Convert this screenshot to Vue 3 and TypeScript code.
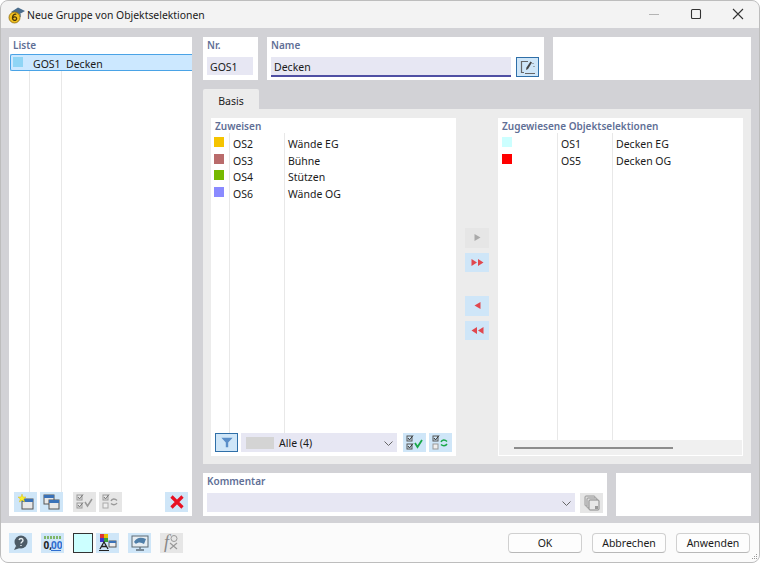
<script setup lang="ts">
const available = [
  { color: '#f5c400', no: 'OS2', name: 'Wände EG' },
  { color: '#b96b6b', no: 'OS3', name: 'Bühne' },
  { color: '#76b900', no: 'OS4', name: 'Stützen' },
  { color: '#8a8aff', no: 'OS6', name: 'Wände OG' },
];
const assigned = [
  { color: '#ccffff', no: 'OS1', name: 'Decken EG' },
  { color: '#ff0000', no: 'OS5', name: 'Decken OG' },
];
</script>

<template>
  <div class="window">
    <header class="titlebar">
      <svg class="app-icon" width="18" height="18" viewBox="0 0 18 18">
        <path d="M3 6 L10 1.5 L17 5 L10 9 Z" fill="#4a6d8c" />
        <path d="M6 8 L13 8 L13 11 L6 11 Z" fill="#7d95aa" />
        <circle cx="6.5" cy="11.5" r="5.5" fill="#f0c020" stroke="#8a6a10" stroke-width="0.8" />
        <path d="M8.3 8.3 C6 7.8 4.4 9.6 4.5 12 C4.6 15 8.6 15 8.6 12.5 C8.6 10.5 5.6 10.4 4.7 12" fill="none" stroke="#4a3808" stroke-width="1.3" />
      </svg>
      <span class="title">Neue Gruppe von Objektselektionen</span>
      <div class="winbtns">
        <svg width="12" height="12" viewBox="0 0 12 12"><path d="M1 6.5 H11" stroke="#b4b4b4" /></svg>
        <svg width="12" height="12" viewBox="0 0 12 12"><rect x="1.5" y="1.5" width="9" height="9" rx="1" fill="none" stroke="#333" stroke-width="1.1" /></svg>
        <svg width="12" height="12" viewBox="0 0 12 12"><path d="M1 1 L11 11 M11 1 L1 11" stroke="#333" stroke-width="1.1" /></svg>
      </div>
    </header>

    <main class="body">
      <aside class="panel list-panel">
        <div class="label">Liste</div>
        <div class="list-area">
          <div class="list-lines"><i></i><i></i></div>
          <div class="list-row">
            <span class="list-swatch"></span>
            <span class="list-no">GOS1</span>
            <span>Decken</span>
          </div>
        </div>
        <div class="list-tools">
          <button class="tb">
            <svg width="17" height="16" viewBox="0 0 17 16">
              <rect x="5" y="5" width="11" height="10" fill="#e8e8e8" stroke="#555" /><rect x="5" y="5" width="11" height="3" fill="#3a72b8" />
              <path d="M5 0 L6 3 L9 3 L6.8 5 L7.6 8 L5 6.3 L2.4 8 L3.2 5 L1 3 L4 3 Z" fill="#f7ee2c" stroke="#d9b100" stroke-width="0.4" />
            </svg>
          </button>
          <button class="tb">
            <svg width="17" height="16" viewBox="0 0 17 16">
              <rect x="1" y="1" width="10" height="9" fill="#e8e8e8" stroke="#555" /><rect x="1" y="1" width="10" height="3" fill="#3a72b8" />
              <rect x="6" y="6" width="10" height="9" fill="#e8e8e8" stroke="#555" /><rect x="6" y="6" width="10" height="3" fill="#3a72b8" />
            </svg>
          </button>
          <button class="tb off tb-first-off">
            <svg width="17" height="16" viewBox="0 0 17 16">
              <rect x="1" y="1" width="5" height="5" fill="none" stroke="#999" /><rect x="1" y="9" width="5" height="5" fill="none" stroke="#999" />
              <path d="M2 3 L3.5 5 L7 0.5 M2 11 L3.5 13 L7 8.5" fill="none" stroke="#777" />
              <path d="M9 8 L11.5 12 L16 5" fill="none" stroke="#999" stroke-width="1.5" />
            </svg>
          </button>
          <button class="tb off">
            <svg width="17" height="16" viewBox="0 0 17 16">
              <rect x="1" y="1" width="5" height="5" fill="none" stroke="#999" /><rect x="1" y="9" width="5" height="5" fill="#eee" stroke="#aaa" />
              <path d="M2 3 L3.5 5 L7 0.5" fill="none" stroke="#777" />
              <path d="M9 7 C10 4.5 13 4.5 15 6.5 M15 9 C13.5 11.5 10.5 11 9 9.5" fill="none" stroke="#999" stroke-width="1.4" />
            </svg>
          </button>
          <button class="tb tb-delete">
            <svg width="16" height="16" viewBox="0 0 16 16"><path d="M2.5 2.5 L13.5 13.5 M13.5 2.5 L2.5 13.5" stroke="#e81123" stroke-width="3.2" /></svg>
          </button>
        </div>
      </aside>

      <section class="main">
        <div class="top-row">
          <div class="panel nr-panel">
            <div class="label">Nr.</div>
            <div class="field">GOS1</div>
          </div>
          <div class="panel name-panel">
            <div class="label">Name</div>
            <div class="name-line">
              <div class="field name-field">Decken</div>
              <button class="tb active">
                <svg width="17" height="16" viewBox="0 0 17 16">
                  <path d="M9 2.5 H2.5 V13.5 H5" fill="none" stroke="#666" stroke-width="1.2" />
                  <path d="M6 14.5 H16" stroke="#666" />
                  <path d="M7 11 L7.5 8.5 L11.5 2.5 L13 3.5 L9 10 Z" fill="#444" />
                  <path d="M14 4 V5 M15 7 V8" stroke="#666" />
                </svg>
              </button>
            </div>
          </div>
          <div class="panel blank"></div>
        </div>

        <div class="tabs"><div class="tab">Basis</div></div>

        <div class="tab-body">
          <div class="panel pick-panel">
            <div class="label">Zuweisen</div>
            <div class="table cols-left">
              <div class="table-lines"><i></i><i></i></div>
              <div v-for="row in available" :key="row.no" class="table-row">
                <span class="swatch" :style="{ background: row.color }"></span>
                <span class="cell-no">{{ row.no }}</span>
                <span>{{ row.name }}</span>
              </div>
            </div>
            <div class="filter-bar">
              <button class="tb active">
                <svg width="12" height="11" viewBox="0 0 15 13"><path d="M0.5 0.5 H14.5 L9 6.5 V12.5 H6 V6.5 Z" fill="#5a8ec8" /></svg>
              </button>
              <div class="combo">
                <span class="combo-swatch"></span>
                <span class="combo-text">Alle (4)</span>
                <svg class="chev" width="9" height="5" viewBox="0 0 9 5"><path d="M0.5 0.5 L4.5 4.5 L8.5 0.5" fill="none" stroke="#666" /></svg>
              </div>
              <button class="tb">
                <svg width="17" height="16" viewBox="0 0 17 16">
                  <rect x="1" y="1" width="5" height="5" fill="none" stroke="#555" /><rect x="1" y="9" width="5" height="5" fill="none" stroke="#555" />
                  <path d="M2 3 L3.5 5 L7 0.5 M2 11 L3.5 13 L7 8.5" fill="none" stroke="#333" />
                  <path d="M9 8 L11.5 12 L16 5" fill="none" stroke="#1aa84a" stroke-width="1.8" />
                </svg>
              </button>
              <button class="tb">
                <svg width="17" height="16" viewBox="0 0 17 16">
                  <rect x="1" y="1" width="5" height="5" fill="none" stroke="#555" /><rect x="1" y="9" width="5" height="5" fill="#eee" stroke="#999" />
                  <path d="M2 3 L3.5 5 L7 0.5" fill="none" stroke="#333" />
                  <path d="M9 7 C10 4.5 13 4.5 15 6.5 M15 9 C13.5 11.5 10.5 11 9 9.5" fill="none" stroke="#1aa84a" stroke-width="1.5" />
                </svg>
              </button>
            </div>
          </div>

          <div class="move-btns">
            <button class="tb off move">
              <svg width="7" height="7" viewBox="0 0 7 7"><path d="M0.5 0 L6.5 3.5 L0.5 7 Z" fill="#aaa" /></svg>
            </button>
            <button class="tb move">
              <svg width="13" height="7" viewBox="0 0 13 7"><path d="M0.5 0 L6 3.5 L0.5 7 Z M7 0 L12.5 3.5 L7 7 Z" fill="#e0484f" /></svg>
            </button>
            <button class="tb move move-gap">
              <svg width="7" height="7" viewBox="0 0 7 7"><path d="M6.5 0 L0.5 3.5 L6.5 7 Z" fill="#e0484f" /></svg>
            </button>
            <button class="tb move">
              <svg width="13" height="7" viewBox="0 0 13 7"><path d="M6 0 L0.5 3.5 L6 7 Z M12.5 0 L7 3.5 L12.5 7 Z" fill="#e0484f" /></svg>
            </button>
          </div>

          <div class="panel pick-panel">
            <div class="label">Zugewiesene Objektselektionen</div>
            <div class="table cols-right">
              <div class="table-lines"><i></i><i></i></div>
              <div v-for="row in assigned" :key="row.no" class="table-row">
                <span class="swatch" :style="{ background: row.color }"></span>
                <span class="cell-no">{{ row.no }}</span>
                <span>{{ row.name }}</span>
              </div>
            </div>
            <div class="scrollbar"><div class="thumb"></div></div>
          </div>
        </div>

        <div class="bottom-row">
          <div class="panel comment-panel">
            <div class="label">Kommentar</div>
            <div class="name-line">
              <div class="combo comment-combo">
                <svg class="chev" width="9" height="5" viewBox="0 0 9 5"><path d="M0.5 0.5 L4.5 4.5 L8.5 0.5" fill="none" stroke="#666" /></svg>
              </div>
              <button class="tb off">
                <svg width="16" height="16" viewBox="0 0 16 16">
                  <rect x="1" y="1" width="10" height="10" rx="1" fill="#ddd" stroke="#999" />
                  <rect x="3" y="3" width="10" height="10" rx="1" fill="#ddd" stroke="#999" />
                  <rect x="5" y="5" width="10" height="10" rx="1" fill="#e8e8e8" stroke="#888" />
                  <rect x="11" y="11" width="3" height="3" fill="#999" />
                </svg>
              </button>
            </div>
          </div>
          <div class="panel blank"></div>
        </div>
      </section>
    </main>

    <footer class="footer">
      <button class="tb">
        <svg width="17" height="16" viewBox="0 0 17 16">
          <circle cx="9" cy="7" r="6.5" fill="#4d5b66" />
          <path d="M4 11 L2 15 L8 13 Z" fill="#4d5b66" />
          <path d="M7 5 C7.5 3 11 3 11 5.2 C11 7 9 7 9 8.6 M9 10 V11" fill="none" stroke="#e8eef2" stroke-width="1.4" />
        </svg>
      </button>
      <button class="tb">
        <svg width="19" height="16" viewBox="0 0 19 16">
          <path d="M1 2.5 H18" stroke="#7fb66a" stroke-width="3" stroke-dasharray="2 1" />
          <text x="0.5" y="14" class="svg-num" fill="#222">0,</text>
          <text x="8" y="14" class="svg-num" fill="#2f6fd0">00</text>
          <path d="M8 15.5 H18" stroke="#2f6fd0" />
        </svg>
      </button>
      <span class="color-box"></span>
      <button class="tb tb-tight">
        <svg width="19" height="17" viewBox="0 0 19 17">
          <rect x="2" y="0" width="4" height="4" fill="#d33" /><rect x="6" y="0" width="4" height="4" fill="#e8c000" />
          <rect x="2" y="4" width="4" height="4" fill="#3a3ad0" /><rect x="6" y="4" width="4" height="4" fill="#3aa03a" />
          <path d="M2 15 L6 8 L10 15 M3.5 12.5 H8.5" fill="none" stroke="#222" stroke-width="1.3" />
          <path d="M1 16.5 H11" stroke="#222" />
          <rect x="11" y="7" width="7" height="6" fill="#eee" stroke="#555" /><rect x="11" y="7" width="7" height="2" fill="#3a72b8" />
        </svg>
      </button>
      <button class="tb">
        <svg width="18" height="16" viewBox="0 0 18 16">
          <rect x="1" y="1" width="16" height="11" fill="#e6edf2" stroke="#5c6a75" />
          <path d="M3 7 C6 2 10 2 15 4 L13 9 C10 7 7 7 5 9 Z" fill="#4f7ea8" />
          <path d="M9 12 V14 M5 15 H13" stroke="#5c6a75" stroke-width="1.3" />
        </svg>
      </button>
      <button class="tb off fx">
        <span class="fx-f">f</span>
        <svg width="10" height="15" viewBox="0 0 10 15">
          <circle cx="5" cy="3.5" r="3" fill="none" stroke="#999" />
          <path d="M1 8 L8 14 M8 8 L1 14" stroke="#999" stroke-width="1.2" />
        </svg>
      </button>
      <div class="actions">
        <button class="dlg">OK</button>
        <button class="dlg">Abbrechen</button>
        <button class="dlg">Anwenden</button>
      </div>
      <svg class="grip" width="8" height="8" viewBox="0 0 8 8"><path d="M6 1 h1 v1 h-1 z M4 3 h1 v1 h-1 z M6 3 h1 v1 h-1 z M2 5 h1 v1 h-1 z M4 5 h1 v1 h-1 z M6 5 h1 v1 h-1 z" fill="#999" /></svg>
    </footer>
  </div>
</template>

<style scoped>
.window {
  width: 760px;
  height: 563px;
  box-sizing: border-box;
  display: flex;
  flex-direction: column;
  border: 1px solid #bdbdbd;
  border-radius: 8px;
  overflow: hidden;
  background: #d2d2d6;
  font-family: "Noto Sans", "Open Sans", sans-serif;
  font-size: 10.5px;
  color: #1a1a1a;
  position: relative;
}

.titlebar {
  height: 27px;
  flex: none;
  display: flex;
  align-items: center;
  padding-left: 7px;
  background: #f3f3f3;
}

.app-icon {
  margin-right: 1px;
}

.title {
  font-size: 10.4px;
}

.winbtns {
  margin-left: auto;
  display: flex;
  gap: 30px;
  padding-right: 15px;
  margin-top: -2px;
  align-items: center;
}

.body {
  flex: none;
  height: 495px;
  box-sizing: border-box;
  display: flex;
  gap: 11px;
  padding: 9px 8px 0;
}

.panel {
  background: #fff;
  box-sizing: border-box;
}

.label {
  color: #5f6f96;
  font-weight: 600;
  font-size: 10px;
  line-height: 14px;
  padding: 1px 0 0 4px;
}

.list-panel {
  width: 183px;
  height: 479px;
  display: flex;
  flex-direction: column;
  flex: none;
}

.list-area {
  flex: 1;
  position: relative;
  margin-top: 2px;
}

.list-lines i,
.table-lines i {
  position: absolute;
  top: 0;
  bottom: 0;
  width: 1px;
  background: #e8e8e8;
}

.list-lines i:nth-child(1) { left: 20px; }
.list-lines i:nth-child(2) { left: 52px; }

.list-row {
  position: relative;
  height: 17px;
  margin-left: 1px;
  box-sizing: border-box;
  display: flex;
  align-items: center;
  padding-top: 2px;
  background: #cce8ff;
  border: 1px solid #4aa3e6;
  border-width: 1px 0;
  border-left-width: 1px;
  border-radius: 2px 0 0 2px;
  line-height: 14px;
}

.list-swatch {
  width: 10px;
  height: 10px;
  margin: -3px 0 0 2px;
  background: #8fd5f5;
}

.list-no {
  width: 33px;
  margin-left: 10px;
}

.list-tools {
  display: flex;
  align-items: center;
  height: 20px;
  padding: 0 4px 4px 5px;
  gap: 3px;
}

.tb {
  width: 23px;
  height: 20px;
  padding: 0;
  flex: none;
  border: 0;
  background: #cfe6f8;
  display: flex;
  align-items: center;
  justify-content: center;
  box-sizing: border-box;
}

.tb.off {
  background: #e6e6e6;
}

.tb.active {
  background: #cfe6f8;
  border: 1px solid #2f6fa8;
}

.tb-first-off {
  margin-left: 7px;
}

.tb-delete {
  margin-left: auto;
}

.main {
  flex: 1;
  min-width: 0;
  display: flex;
  flex-direction: column;
}

.top-row {
  height: 43px;
  flex: none;
  display: flex;
  gap: 9px;
}

.nr-panel {
  width: 55px;
  flex: none;
}

.field {
  height: 18px;
  margin: 5px 0 0 4px;
  width: 46px;
  box-sizing: border-box;
  background: #e7e7f3;
  padding-left: 3px;
  line-height: 20px;
}

.name-panel {
  width: 277px;
  flex: none;
}

.name-line {
  display: flex;
  gap: 5px;
  margin: 5px 0 0 4px;
}

.name-field {
  margin: 0;
  width: 240px;
  height: 20px;
  border-bottom: 2px solid #4f4fa3;
  line-height: 20px;
}

.blank {
  flex: 1;
}

.tabs {
  height: 20px;
  margin-top: 9px;
  flex: none;
}

.tab {
  width: 56px;
  height: 20px;
  background: #ececec;
  text-align: center;
  line-height: 24px;
  color: #222;
  border-radius: 2px 2px 0 0;
}

.tab-body {
  height: 355px;
  flex: none;
  box-sizing: border-box;
  background: #ececec;
  padding: 9px 8px 8px;
  display: flex;
}

.pick-panel {
  width: 245px;
  flex: none;
  display: flex;
  flex-direction: column;
}

.table {
  flex: 1;
  position: relative;
  padding-top: 3px;
}

.cols-left .table-lines i:nth-child(1) { left: 18px; }
.cols-left .table-lines i:nth-child(2) { left: 73px; }
.cols-right .table-lines i:nth-child(1) { left: 59px; }
.cols-right .table-lines i:nth-child(2) { left: 114px; }

.table-row {
  position: relative;
  height: 16.5px;
  display: flex;
  align-items: center;
  line-height: 16px;
}

.swatch {
  width: 10px;
  height: 10px;
  margin-top: -4px;
  flex: none;
}

.cols-left .table-row { padding-left: 3px; }
.cols-left .cell-no { width: 55px; margin-left: 9px; }
.cols-right .table-row { padding-left: 4px; }
.cols-right .cell-no { width: 55px; margin-left: 49px; }

.filter-bar {
  display: flex;
  align-items: center;
  padding: 0 4px 4px;
  gap: 3px;
}

.filter-bar .tb {
  height: 19px;
}

.combo {
  height: 19px;
  width: 156px;
  box-sizing: border-box;
  background: #e7e7f3;
  display: flex;
  align-items: center;
  position: relative;
  margin-right: 3px;
}

.combo-swatch {
  width: 28px;
  height: 12px;
  background: #d4d4d4;
  margin: 0 5px 0 5px;
}

.combo-text {
  line-height: 20px;
  padding-top: 1px;
}

.chev {
  position: absolute;
  right: 4px;
  top: 8px;
}

.move-btns {
  width: 42px;
  flex: none;
  display: flex;
  flex-direction: column;
  align-items: center;
  padding-top: 110px;
  gap: 5px;
}

.move {
  width: 24px;
  height: 19.5px;
}

.move-gap {
  margin-top: 19px;
}

.scrollbar {
  height: 15px;
  margin: 0 1px 1px;
  background: #f0f0f0;
  display: flex;
  align-items: center;
  padding-left: 15px;
}

.thumb {
  width: 159px;
  height: 2px;
  background: #8c8c8c;
}

.bottom-row {
  height: 43px;
  margin-top: 9px;
  flex: none;
  display: flex;
  gap: 9px;
}

.comment-panel {
  width: 404px;
  flex: none;
}

.comment-combo {
  width: 368px;
  margin-right: 0;
}

.footer {
  flex: none;
  height: 39px;
  background: #fbfbfb;
  display: flex;
  align-items: center;
  padding: 0 9px 0 8px;
  gap: 9px;
}

.color-box {
  width: 20px;
  height: 20px;
  box-sizing: border-box;
  border: 1px solid #333;
  background: #ccffff;
}

.tb-tight {
  margin-left: -6px;
}

.fx {
  gap: 0;
  font-family: "Liberation Serif", serif;
  color: #888;
}

.fx-f {
  font-size: 18px;
  font-style: italic;
}

.svg-num {
  font-size: 10px;
  font-weight: 700;
  font-family: "Noto Sans", sans-serif;
}

.actions {
  margin-left: auto;
  display: flex;
  gap: 10px;
}

.dlg {
  width: 74px;
  height: 20px;
  padding: 0;
  background: #fdfdfd;
  border: 1px solid #d0d0d0;
  border-bottom-color: #b8b8b8;
  border-radius: 4px;
  font: inherit;
  color: #1a1a1a;
}

.grip {
  position: absolute;
  right: 1px;
  bottom: 1px;
}
</style>

<style>
html, body { background: #fff; }
</style>
